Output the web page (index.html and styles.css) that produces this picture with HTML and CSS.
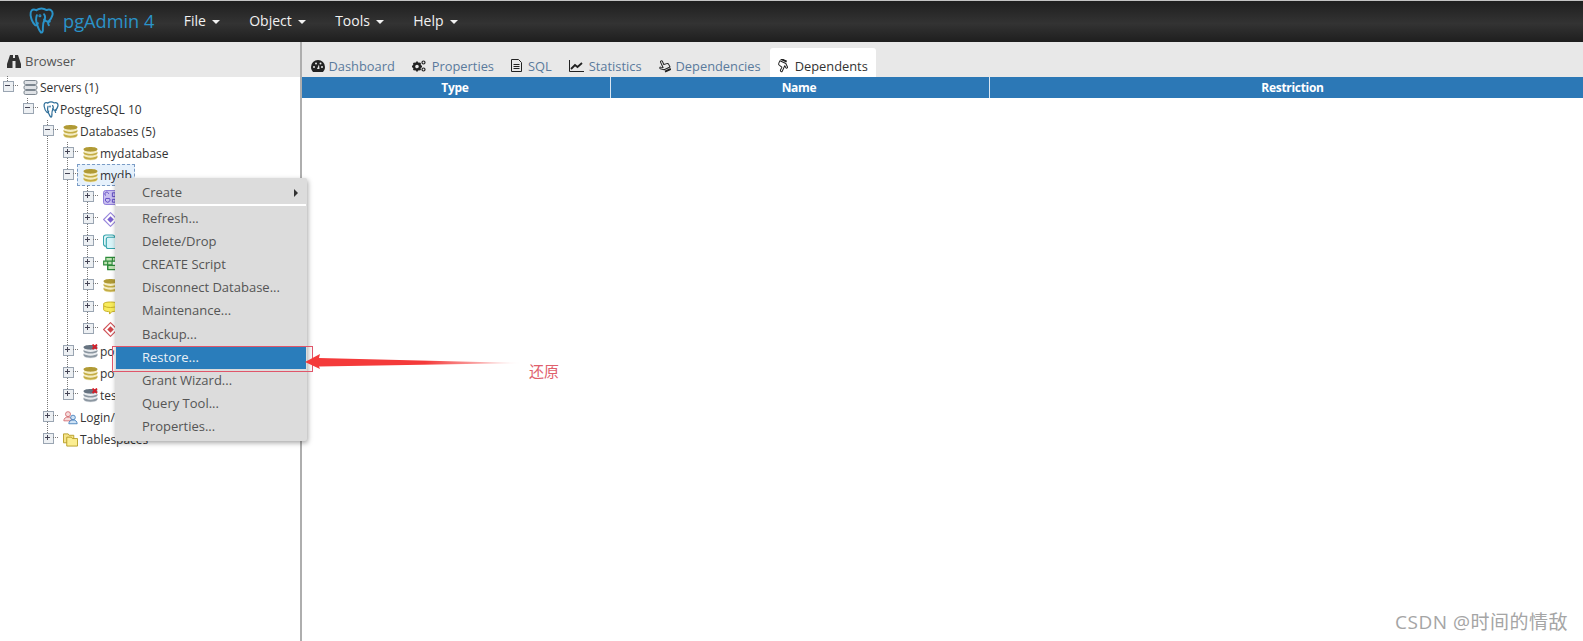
FILE: index.html
```html
<!DOCTYPE html>
<html lang="en">
<head>
<meta charset="utf-8">
<title>pgAdmin 4</title>
<link rel="stylesheet" href="styles.css">
</head>
<body>
<svg class="defs" width="0" height="0" aria-hidden="true">
  <symbol id="db" viewBox="0 0 15 14">
    <path d="M1 3c0-3 13-3 13 0v9c0 2.500-13 2.500-13 0z" fill="#f4edc4"/>
    <path d="M.5 2.800c0-3.200 14-3.200 14 0s-14 3.200-14 0z" fill="#b09a35"/>
    <path d="M.5 5.300c2 2.800 12 2.800 14 0v1.700c-2 2.800-12 2.800-14 0zM.5 9.100c2 2.800 12 2.800 14 0v1.900c-2 3-12 3-14 0z" fill="#c4ad45"/>
  </symbol>
  <symbol id="dboff" viewBox="0 0 15 14">
    <path d="M1 3c0-3 13-3 13 0v9c0 2.500-13 2.500-13 0z" fill="#e8ebee"/>
    <path d="M.5 2.800c0-3.200 14-3.200 14 0s-14 3.200-14 0z" fill="#667380"/>
    <path d="M.5 5.300c2 2.800 12 2.800 14 0v1.700c-2 2.800-12 2.800-14 0zM.5 9.100c2 2.800 12 2.800 14 0v1.900c-2 3-12 3-14 0z" fill="#8c97a1"/>
    <path d="M9.500 0l4.500 4.500M14 0L9.500 4.500" stroke="#d4202a" stroke-width="1.800"/>
  </symbol>
  <symbol id="elephant" viewBox="0 0 24 26">
    <g fill="none" stroke="currentColor" stroke-width="1.900" stroke-linejoin="round" stroke-linecap="round">
      <path d="M7 3C3 1 1 4 1.500 8c.5 3 2 7 4 9 1.300 1.200 2.500.5 3-1.500"/>
      <path d="M7 3c3-2 7-2 10 0 3.500-1.500 6.500 1 5.500 5-.7 3-2.500 5-4 6.500-.5 1 0 2 .5 3"/>
      <path d="M7.500 8c-1 3-.5 8 1 11 .8 2 1.500 4 3 5.500 1.500.5 2-1.500 1.800-4 0-3 .2-5.500 1.500-8 1-2 .7-4-.3-5.500"/>
      <path d="M14.500 12c1.500 2 3.500 2.500 5.500 2"/>
      <circle cx="10.500" cy="8.500" r=".5"/>
    </g>
  </symbol>
  <symbol id="server" viewBox="0 0 14 15">
    <g fill="#dfe2e6" stroke="#7d8790">
      <rect x=".5" y=".5" width="13" height="4" rx="1.500"/>
      <rect x=".5" y="5.500" width="13" height="4" rx="1.500"/>
      <rect x=".5" y="10.500" width="13" height="4" rx="1.500"/>
    </g>
  </symbol>
  <symbol id="catalog" viewBox="0 0 16 16">
    <rect x=".5" y=".5" width="15" height="15" rx="2.500" fill="#c9bff0" stroke="#8a78d8"/>
    <path d="M6 4a2 2 0 1 0-3 2M3 9a2.500 2.500 0 1 0 4 0zM10 3h3v4h-3zM10 10h3v3h-3z" fill="none" stroke="#5c47c0"/>
  </symbol>
  <symbol id="diamond" viewBox="0 0 16 16">
    <path d="M8 .7L15.300 8 8 15.300.7 8z" fill="#fff" stroke="#9a88dc" stroke-width="1.200"/>
    <path d="M8 4.500L11.500 8 8 11.500 4.500 8z" fill="#7a5fd0"/>
  </symbol>
  <symbol id="copies" viewBox="0 0 16 16">
    <rect x=".5" y="1" width="12" height="12" rx="2.500" fill="#e2f6f8" stroke="#36a5ad" stroke-width="1.200"/>
    <rect x="3.500" y="3.500" width="12" height="12" rx="2" fill="#d8f4f8" stroke="#36a5ad" stroke-width="1.200"/>
  </symbol>
  <symbol id="green" viewBox="0 0 16 16">
    <path d="M3 1.500h10v4H3zM.7 5.500h9v4h-9zM5 10h10v4.500H5z" fill="#bfe3b4" stroke="#2d8a3a" stroke-width="1.200"/>
    <path d="M5 5.500v9M10 1.500v4" stroke="#2d8a3a" stroke-width="1.200"/>
  </symbol>
  <symbol id="yellow" viewBox="0 0 16 16">
    <path d="M.7 4C.7 1.500 15.300 1.500 15.300 4v6.500c0 1.500-5 2-6 2L7 15v-2.500c-1 0-6.300-.5-6.300-2z" fill="#f8ec5c" stroke="#c4ad25"/>
    <path d="M1 6.500c3 2 11 2 14 0" fill="none" stroke="#c4ad25"/>
  </symbol>
  <symbol id="reddiamond" viewBox="0 0 16 16">
    <path d="M8 .7L15.300 8 8 15.300.7 8z" fill="#fff" stroke="#d0555a" stroke-width="1.200"/>
    <path d="M8 4.500L11.500 8 8 11.500 4.500 8z" fill="#d0454a"/>
  </symbol>
  <symbol id="login" viewBox="0 0 18 16">
    <circle cx="6" cy="4" r="3" fill="#f6dcdc" stroke="#d0656a"/>
    <path d="M1 12c0-3 2-4.500 5-4.500s5 1.500 5 4.500z" fill="#f6dcdc" stroke="#d0656a"/>
    <circle cx="12" cy="8" r="2.800" fill="#cfe3f6" stroke="#3a78b8"/>
    <path d="M7 15.500c0-3 2-4.500 5-4.500s5 1.500 5 4.500z" fill="#cfe3f6" stroke="#3a78b8"/>
  </symbol>
  <symbol id="folder" viewBox="0 0 16 15">
    <path d="M.5 1.500h5l1 1.500h5v8H.5z" fill="#f5e38a" stroke="#b79f28"/>
    <path d="M4 5h5l1 1.500h5.500v8H4z" fill="#fbee92" stroke="#b79f28"/>
  </symbol>
  <symbol id="hand" viewBox="0 0 14 14">
    <g fill="none" stroke="#222" stroke-width="1" stroke-linejoin="round">
      <path d="M5.500 6V2c0-1.200 2-1.200 2 0v3.500l3 .5c1 .2 1.500.8 1.500 1.800v2.700H5.500L2.500 8c-.8-.8.3-2 1.200-1.300L5.500 8z"/>
      <path d="M5.500 12.500h6.500" stroke-width="2"/>
    </g>
  </symbol>
</svg>

<div class="topline"></div>
<header class="navbar">
  <div class="brand">
    <svg class="brand-logo"><use href="#elephant"/></svg>
    <span>pgAdmin 4</span>
  </div>
  <nav class="nav">
    <span class="nav-item">File<i class="caret"></i></span>
    <span class="nav-item">Object<i class="caret"></i></span>
    <span class="nav-item">Tools<i class="caret"></i></span>
    <span class="nav-item">Help<i class="caret"></i></span>
  </nav>
</header>

<main class="workspace">
  <aside class="browser">
    <div class="panel-head">
      <svg class="bino" viewBox="0 0 14 13"><path d="M3 0h3v3h2V0h3l3 9v4H8.500V6h-3v7H0V9z" fill="#333"/></svg>
      <span>Browser</span>
    </div>
    <div class="tree">
      <div class="row"><span class="tog minus end"></span><svg class="ico"><use href="#server"/></svg><span class="label">Servers (1)</span></div>
      <div class="row"><span class="g"></span><span class="tog minus end"></span><svg class="ico pg"><use href="#elephant"/></svg><span class="label">PostgreSQL 10</span></div>
      <div class="row"><span class="g"></span><span class="g"></span><span class="tog minus"></span><svg class="ico"><use href="#db"/></svg><span class="label">Databases (5)</span></div>
      <div class="row"><span class="g"></span><span class="g"></span><span class="g v"></span><span class="tog plus"></span><svg class="ico"><use href="#db"/></svg><span class="label">mydatabase</span></div>
      <div class="row"><span class="g"></span><span class="g"></span><span class="g v"></span><span class="tog minus"></span><span class="selected"><svg class="ico"><use href="#db"/></svg><span class="label">mydb</span></span></div>
      <div class="row"><span class="g"></span><span class="g"></span><span class="g v"></span><span class="g v"></span><span class="tog plus"></span><svg class="ico"><use href="#catalog"/></svg></div>
      <div class="row"><span class="g"></span><span class="g"></span><span class="g v"></span><span class="g v"></span><span class="tog plus"></span><svg class="ico"><use href="#diamond"/></svg></div>
      <div class="row"><span class="g"></span><span class="g"></span><span class="g v"></span><span class="g v"></span><span class="tog plus"></span><svg class="ico"><use href="#copies"/></svg></div>
      <div class="row"><span class="g"></span><span class="g"></span><span class="g v"></span><span class="g v"></span><span class="tog plus"></span><svg class="ico"><use href="#green"/></svg></div>
      <div class="row"><span class="g"></span><span class="g"></span><span class="g v"></span><span class="g v"></span><span class="tog plus"></span><svg class="ico"><use href="#db"/></svg></div>
      <div class="row"><span class="g"></span><span class="g"></span><span class="g v"></span><span class="g v"></span><span class="tog plus"></span><svg class="ico"><use href="#yellow"/></svg></div>
      <div class="row"><span class="g"></span><span class="g"></span><span class="g v"></span><span class="g v"></span><span class="tog plus end"></span><svg class="ico"><use href="#reddiamond"/></svg></div>
      <div class="row"><span class="g"></span><span class="g"></span><span class="g v"></span><span class="tog plus"></span><svg class="ico"><use href="#dboff"/></svg><span class="label">postgres</span></div>
      <div class="row"><span class="g"></span><span class="g"></span><span class="g v"></span><span class="tog plus"></span><svg class="ico"><use href="#db"/></svg><span class="label">postgres</span></div>
      <div class="row"><span class="g"></span><span class="g"></span><span class="g v"></span><span class="tog plus end"></span><svg class="ico"><use href="#dboff"/></svg><span class="label">test</span></div>
      <div class="row"><span class="g"></span><span class="g"></span><span class="tog plus"></span><svg class="ico"><use href="#login"/></svg><span class="label">Login/Group Roles</span></div>
      <div class="row"><span class="g"></span><span class="g"></span><span class="tog plus end"></span><svg class="ico"><use href="#folder"/></svg><span class="label">Tablespaces</span></div>
    </div>
  </aside>

  <section class="content">
    <div class="tabs">
      <span class="tab">
        <svg class="tab-ico gauge" viewBox="0 0 14 12"><path d="M7 0a7 7 0 0 0-7 7c0 2 .8 3.500 2 5h10c1.200-1.500 2-3 2-5a7 7 0 0 0-7-7z" fill="#222"/><circle cx="3" cy="7" r="1" fill="#e8e8e8"/><circle cx="5" cy="3.500" r="1" fill="#e8e8e8"/><circle cx="11" cy="7" r="1" fill="#e8e8e8"/><circle cx="9.500" cy="3.500" r="1" fill="#e8e8e8"/><path d="M6 9l2-4.500 .5 4.500z" fill="#e8e8e8"/></svg>
        Dashboard</span>
      <span class="tab">
        <svg class="tab-ico cogs" viewBox="0 0 14 12"><circle cx="5" cy="6.500" r="3" fill="none" stroke="#222" stroke-width="2.400"/><path d="M5 1.500v2M5 9.500v2M0 6.500h2M8 6.500h2M1.500 3l1.500 1.500M8.500 3L7 4.500M1.500 10L3 8.500M8.500 10L7 8.500" stroke="#222" stroke-width="1.800"/><circle cx="11.500" cy="2.500" r="1.500" fill="none" stroke="#222" stroke-width="1.200"/><circle cx="11.500" cy="9.500" r="1.500" fill="none" stroke="#222" stroke-width="1.200"/></svg>
        Properties</span>
      <span class="tab">
        <svg class="tab-ico sql" viewBox="0 0 11 13"><path d="M.5.500h7l3 3v9H.5z" fill="none" stroke="#222"/><path d="M2.500 5.500h6M2.500 7.500h6M2.500 9.500h6" stroke="#222"/></svg>
        SQL</span>
      <span class="tab stats">
        <svg class="tab-ico stat" viewBox="0 0 15 12"><path d="M.5 0v11.500H15" fill="none" stroke="#222"/><path d="M2 9l4-4 2.500 2L13 3" fill="none" stroke="#222" stroke-width="1.800"/></svg>
        Statistics</span>
      <span class="tab">
        <svg class="tab-ico hand" viewBox="0 0 14 14"><use href="#hand" class="tilt-up"/></svg>
        Dependencies</span>
      <span class="tab active">
        <svg class="tab-ico hand" viewBox="0 0 14 14"><use href="#hand" class="tilt-down"/></svg>
        Dependents</span>
    </div>
    <div class="table-head">
      <span class="col">Type</span>
      <span class="col">Name</span>
      <span class="col">Restriction</span>
    </div>
  </section>
</main>

<div class="context-menu">
  <div class="mi">Create<i class="sub"></i></div>
  <div class="sep"></div>
  <div class="mi">Refresh...</div>
  <div class="mi">Delete/Drop</div>
  <div class="mi">CREATE Script</div>
  <div class="mi">Disconnect Database...</div>
  <div class="mi">Maintenance...</div>
  <div class="mi backup">Backup...</div>
  <div class="mi current">Restore...</div>
  <div class="mi">Grant Wizard...</div>
  <div class="mi">Query Tool...</div>
  <div class="mi">Properties...</div>
</div>

<div class="red-box"></div>
<svg class="arrow" viewBox="0 0 220 18" width="220" height="18">
  <defs>
    <linearGradient id="fade" x1="0" x2="1" y1="0" y2="0">
      <stop offset="0" stop-color="#f43a3a"/>
      <stop offset=".55" stop-color="#f43a3a"/>
      <stop offset="1" stop-color="#f43a3a" stop-opacity="0"/>
    </linearGradient>
  </defs>
  <path d="M0 9L15 1 14 5 218 10 14 13.500 15 16z" fill="url(#fade)"/>
</svg>
<div class="note">还原</div>
<div class="watermark">CSDN @时间的情敌</div>
</body>
</html>
```
FILE: styles.css
```css
* { box-sizing: border-box; }
html, body { margin: 0; height: 641px; overflow: hidden; background: #fff; }
body { font-family: "Open Sans", "Noto Sans", "Noto Sans CJK SC", sans-serif; font-size: 12px; color: #333; display: flex; flex-direction: column; }
.defs { position: absolute; }

.topline { height: 1px; background: #c4c4c4; flex: none; }
.navbar { height: 41px; flex: none; display: flex; align-items: center; padding-bottom: 2px; background: linear-gradient(#1f1f1f, #333 55%, #1e1e1e); color: #fff; }
.brand { display: flex; align-items: center; width: 169px; padding-left: 29px; gap: 9px; color: #2a93c9; font-size: 18.2px; }
.brand-logo { width: 25px; height: 27px; }
.nav { display: flex; font-size: 14px; color: #f2f2f2; }
.nav-item { padding: 0 14.7px; display: flex; align-items: center; }
.caret { margin-left: 6px; margin-top: 2px; width: 0; height: 0; border: 4px solid transparent; border-top-color: #f2f2f2; border-bottom: 0; }

.workspace { flex: 1; display: flex; min-height: 0; }
.browser { width: 302px; flex: none; border-right: 2px solid #aeaeae; }
.panel-head { height: 35px; background: #e8e8e8; display: flex; align-items: center; gap: 4px; padding: 3px 0 0 7px; font-size: 13px; color: #555; }
.bino { width: 14px; height: 13px; }

.tree { margin-top: -1px; }
.row { height: 22px; display: flex; align-items: center; }
.g { width: 20px; height: 100%; flex: none; }
.g.v, .tog { background: repeating-linear-gradient(#777 0 1px, transparent 1px 2px) 7px 0 / 1px 100% no-repeat; }
.tog { width: 20px; height: 100%; flex: none; position: relative; }
.tog.end { background-size: 1px 6px; }
.tog::before { content: ""; position: absolute; left: 3px; top: 5px; width: 9px; height: 9px; border: 1px solid #9aa5b2; background: linear-gradient(#445, #445) 1px 3px / 5px 1px no-repeat, #edf0f3; }
.tog.plus::before { background: linear-gradient(#445, #445) 1px 3px / 5px 1px no-repeat, linear-gradient(#445, #445) 3px 1px / 1px 5px no-repeat, #edf0f3; }
.tog::after { content: ""; position: absolute; left: 13px; top: 9px; width: 6px; height: 1px; background: linear-gradient(90deg, #777 50%, transparent 50%) 0 0 / 2px 1px repeat-x; }
.ico { width: 15px; height: 15px; margin-left: 3px; flex: none; }
.ico.pg { width: 16px; height: 17px; margin-right: -1px; color: #2f6f9a; }
.label { margin-left: 2px; white-space: nowrap; }
.selected { margin-left: -3px; display: flex; align-items: center; width: 58px; height: 22px; padding-left: 2px; border: 1px dashed #7a9cc6; background: #e6f1fc; }
.selected .ico { margin-left: 3px; }

.content { flex: 1; min-width: 0; display: flex; flex-direction: column; }
.tabs { height: 35px; background: #e8e8e8; display: flex; align-items: flex-end; font-size: 12.85px; color: #5a7a9c; }
.tab { height: 29px; display: flex; align-items: center; gap: 5px; padding: 6px 8.5px 0; white-space: nowrap; }
.tab.stats { padding-right: 6.5px; }
.tab.active { background: #fff; color: #333; border-radius: 3px 3px 0 0; margin-left: 1px; padding-left: 5.5px; }
.tab-ico { width: 14px; height: 12px; flex: none; }
.tab-ico.gauge { margin-right: -1px; }
.tab-ico.cogs { margin-right: 1px; }
.tab-ico.sql { width: 11px; height: 13px; margin-right: 1px; }
.tab-ico.stat { width: 15px; height: 12px; }
.tab-ico.hand { width: 14px; height: 14px; }
.tilt-up { transform: rotate(-25deg); transform-origin: 7px 7px; }
.tilt-down { transform: rotate(205deg); transform-origin: 7px 7px; }

.table-head { height: 21px; background: #2c78b6; display: grid; grid-template-columns: 309px 379px 1fr; color: #fff; font-weight: 700; font-size: 12px; letter-spacing: -.3px; }
.col { display: flex; align-items: center; justify-content: center; padding-right: 2px; border-right: 1px solid #d9e6f2; }
.col:last-child { border-right: 0; padding: 0 0 0 12px; }

.context-menu { position: absolute; left: 115px; top: 178px; width: 192px; height: 263px; padding: 3px 1px 4px; background: #dcdcdc; border-radius: 2px; box-shadow: 1px 2px 5px rgba(0, 0, 0, .35); font-size: 13px; color: #555; }
.mi { height: 23px; line-height: 22px; padding-left: 26px; position: relative; }
.mi.backup { margin-top: 1px; }
.mi.current { background: #2a7dbb; color: #e8f0f6; }
.sep { height: 2px; background: #fff; margin: 0 0 1px; }
.sub { position: absolute; right: 8px; top: 8px; width: 0; height: 0; border: 4px solid transparent; border-left-color: #333; border-right: 0; }

.red-box { position: absolute; left: 112px; top: 346px; width: 201px; height: 26px; border: 1px solid #e0566a; }
.arrow { position: absolute; left: 305px; top: 353px; }
.note { position: absolute; left: 529px; top: 360px; font-size: 15px; line-height: 22px; color: #e0606c; }
.watermark { position: absolute; right: 15px; top: 609px; font-size: 19px; letter-spacing: .5px; line-height: 26px; color: #a5a5a5; white-space: nowrap; }
```
